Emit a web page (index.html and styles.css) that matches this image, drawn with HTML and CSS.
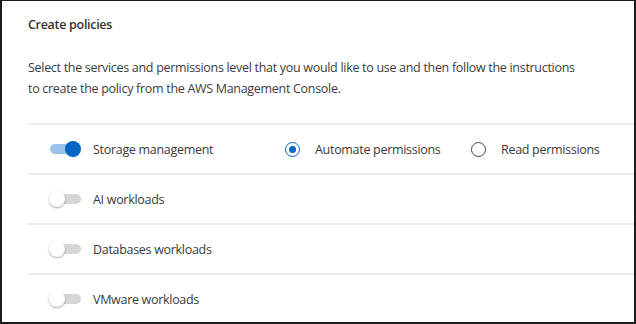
FILE: index.html
```html
<!DOCTYPE html>
<html>
<head>
<meta charset="utf-8">
<link rel="stylesheet" href="styles.css">
</head>
<body>
<div class="frame">
  <h2 class="title">Create policies</h2>
  <p class="desc">Select the services and permissions level that you would like to use and then follow the instructions<br>to create the policy from the AWS Management Console.</p>
  <div class="list">
    <div class="row">
      <span class="toggle on"><span class="knob"></span></span>
      <span class="label">Storage management</span>
      <span class="radio checked"></span>
      <span class="opt">Automate permissions</span>
      <span class="radio"></span>
      <span class="opt">Read permissions</span>
    </div>
    <div class="row">
      <span class="toggle"><span class="knob"></span></span>
      <span class="label">AI workloads</span>
    </div>
    <div class="row">
      <span class="toggle"><span class="knob"></span></span>
      <span class="label">Databases workloads</span>
    </div>
    <div class="row">
      <span class="toggle"><span class="knob"></span></span>
      <span class="label">VMware workloads</span>
    </div>
  </div>
</div>
</body>
</html>
```
FILE: styles.css
```css
html, body {
  margin: 0;
  padding: 0;
  background: #fff;
}
body {
  font-family: "Open Sans", "Noto Sans", sans-serif;
  color: #3a3a3a;
  letter-spacing: -0.3px;
}
.frame {
  box-sizing: border-box;
  width: 636px;
  height: 324px;
  border: 2px solid #1b1b1b;
  border-top-width: 1px;
  padding-left: 26px;
  overflow: hidden;
}
.title {
  margin: 0;
  padding-top: 15px;
  font-size: 12.5px;
  line-height: 18px;
  font-weight: 600;
  color: #333;
}
.desc {
  margin: 0;
  padding-top: 23px;
  font-size: 12.5px;
  line-height: 21px;
  color: #3c3c3c;
}
.list {
  margin-top: 24px;
}
.row {
  display: flex;
  align-items: center;
  height: 48px;
  border-top: 2px solid #ececec;
  padding-left: 21px;
  font-size: 12.5px;
}
.toggle {
  position: relative;
  width: 32px;
  height: 16px;
  flex: none;
  display: flex;
  align-items: center;
}
.toggle::before {
  content: "";
  display: block;
  width: 31px;
  height: 10px;
  border-radius: 5px;
  background: #d6d6d6;
  margin-left: 1px;
}
.toggle.on::before {
  background: #9bc2ea;
  width: 29px;
}
.knob {
  position: absolute;
  left: 0;
  top: 0;
  width: 16px;
  height: 16px;
  border-radius: 50%;
  background: #fff;
  box-shadow: 0 1px 2px rgba(0,0,0,0.35);
}
.toggle.on .knob {
  left: auto;
  right: 0;
  background: #0366c5;
  box-shadow: none;
}
.label {
  width: 192px;
  margin-left: 12px;
  flex: none;
}
.radio {
  box-sizing: border-box;
  width: 15px;
  height: 15px;
  border-radius: 50%;
  border: 1.5px solid #444;
  flex: none;
  display: flex;
  align-items: center;
  justify-content: center;
}
.radio.checked {
  border-color: #0366c5;
}
.radio.checked::after {
  content: "";
  width: 7px;
  height: 7px;
  border-radius: 50%;
  background: #0366c5;
}
.opt {
  margin-left: 15px;
  width: 156px;
  flex: none;
}
```
